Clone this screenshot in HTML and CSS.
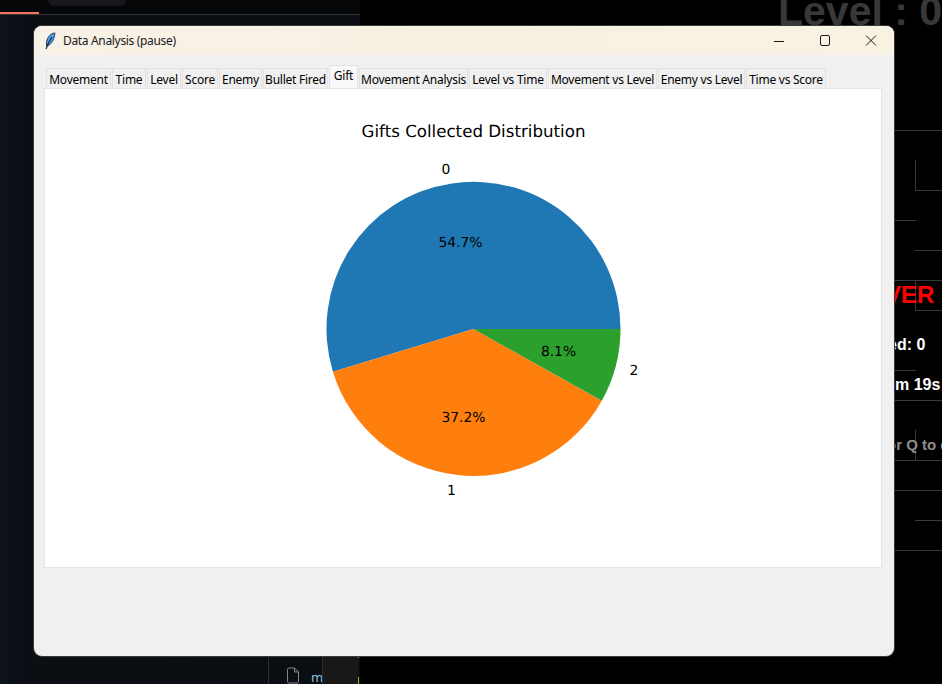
FILE: index.html
```html
<!DOCTYPE html>
<html lang="en">
<head>
<meta charset="utf-8">
<title>Data Analysis (pause)</title>
<link rel="stylesheet" href="styles.css">
</head>
<body>
<div class="desktop">
  <div class="editor-side">
    <div class="pill"></div>
    <div class="progress"></div>
    <div class="rule"></div>
    <div class="file-divider"></div>
    <svg class="file-icon" viewBox="0 0 14 17" width="14" height="17"><path d="M1.500 2.500a1.500 1.500 0 0 1 1.500-1.500h5.500l4 4v9.500a1.500 1.500 0 0 1-1.500 1.500h-8a1.500 1.500 0 0 1-1.500-1.500zM8.500 1v4h4" fill="none" stroke="#83878e" stroke-width="1"/></svg>
    <span class="file-name">m</span>
    <div class="file-tab"></div>
    <div class="tick tick-a"></div>
    <div class="tick tick-b"></div>
  </div>
  <div class="game">
    <span class="level">Level : 0</span>
    <span class="maze h" style="left:534px;top:130px;width:48px"></span>
    <span class="maze h" style="left:534px;top:220px;width:22px"></span>
    <span class="maze v" style="left:555px;top:160px;height:30px"></span>
    <span class="maze h" style="left:555px;top:190px;width:27px"></span>
    <span class="maze h" style="left:555px;top:250px;width:27px"></span>
    <span class="maze h" style="left:534px;top:280px;width:48px"></span>
    <span class="maze v" style="left:555px;top:280px;height:30px"></span>
    <span class="maze h" style="left:555px;top:310px;width:27px"></span>
    <span class="maze h" style="left:534px;top:370px;width:22px"></span>
    <span class="maze h" style="left:534px;top:400px;width:48px"></span>
    <span class="maze v" style="left:555px;top:430px;height:30px"></span>
    <span class="maze h" style="left:534px;top:460px;width:48px"></span>
    <span class="maze h" style="left:534px;top:490px;width:48px"></span>
    <span class="maze h" style="left:555px;top:520px;width:27px"></span>
    <span class="maze h" style="left:534px;top:550px;width:48px"></span>
    <span class="game-over">VER</span>
    <span class="stat stat-gifts">ed: 0</span>
    <span class="stat stat-time">m 19s</span>
    <span class="stat stat-quit">or Q to q</span>
  </div>

  <div class="window">
    <header class="titlebar">
      <svg class="feather" viewBox="0 0 12 18" width="12" height="18">
        <path d="M11 1C7 1 3.500 4.500 2.500 10L2.500 14C6.500 13.500 10 9 11 1Z" fill="#4a9ce8" stroke="#14263a" stroke-width="0.800"/>
        <path d="M8 5C6 8 3.500 12 2 17" fill="none" stroke="#0e2238" stroke-width="1.100"/>
      </svg>
      <span class="title">Data Analysis (pause)</span>
      <div class="controls">
        <svg class="ctl" viewBox="0 0 46 29" width="46" height="29"><path d="M18 15.500h10" stroke="#1a1a1a"/></svg>
        <svg class="ctl" viewBox="0 0 46 29" width="46" height="29"><rect x="18.500" y="9.500" width="9" height="10" rx="1.500" fill="none" stroke="#1a1a1a"/></svg>
        <svg class="ctl" viewBox="0 0 46 29" width="46" height="29"><path d="M18 9.500l10 10M28 9.500l-10 10" stroke="#1a1a1a" fill="none"/></svg>
      </div>
    </header>
    <div class="content">
      <nav class="tabs">
        <span class="tab t-movement">Movement</span>
        <span class="tab t-time">Time</span>
        <span class="tab t-level">Level</span>
        <span class="tab t-score">Score</span>
        <span class="tab t-enemy">Enemy</span>
        <span class="tab t-bullet">Bullet Fired</span>
        <span class="tab active t-gift">Gift</span>
        <span class="tab t-analysis">Movement Analysis</span>
        <span class="tab t-lvt">Level vs Time</span>
        <span class="tab t-mvl">Movement vs Level</span>
        <span class="tab t-evl">Enemy vs Level</span>
        <span class="tab t-tvs">Time vs Score</span>
      </nav>
      <section class="panel">
        <svg class="chart" viewBox="0 0 836 478" width="836" height="478">
          <text class="chart-title" x="428.500" y="48" text-anchor="middle">Gifts Collected Distribution</text>
          <path d="M428.500 240L575.500 240A147 147 0 1 0 287.900 282.700Z" fill="#1f77b4"/>
          <path d="M428.500 240L287.900 282.700A147 147 0 0 0 556.800 311.700Z" fill="#ff7f0e"/>
          <path d="M428.500 240L556.800 311.700A147 147 0 0 0 575.500 240Z" fill="#2ca02c"/>
          <text class="chart-label" x="401" y="84.500" text-anchor="middle">0</text>
          <text class="chart-label" x="415.500" y="157.500" text-anchor="middle">54.7%</text>
          <text class="chart-label" x="406.500" y="405.500" text-anchor="middle">1</text>
          <text class="chart-label" x="418.500" y="332.500" text-anchor="middle">37.2%</text>
          <text class="chart-label" x="589" y="285.500" text-anchor="middle">2</text>
          <text class="chart-label" x="513.500" y="266.500" text-anchor="middle">8.1%</text>
        </svg>
      </section>
    </div>
  </div>
</div>
</body>
</html>
```
FILE: styles.css
```css
* { box-sizing: border-box; }
html, body { margin: 0; padding: 0; }
body { width: 942px; height: 684px; overflow: hidden; background: #000; font-family: "Liberation Sans", Arial, sans-serif; }
.desktop { position: relative; width: 942px; height: 684px; overflow: hidden; }

.editor-side { position: absolute; left: 0; top: 0; width: 360px; height: 684px; background: linear-gradient(90deg, #0d1219 0, #0b0e13 30px, #0a0d11 100%); }
.editor-side::before { content: ""; position: absolute; left: 0; top: 0; width: 360px; height: 14px; background: #050608; }
.pill { position: absolute; left: 48px; top: -10px; width: 78px; height: 16px; border-radius: 6px; background: #16181d; }
.progress { position: absolute; left: 0; top: 12px; width: 39px; height: 2px; background: #f4735f; }
.rule { position: absolute; left: 0; top: 14px; width: 360px; height: 1px; background: #34373c; }
.file-divider { position: absolute; left: 268px; top: 656px; width: 1px; height: 28px; background: #2b2e33; }
.file-icon { position: absolute; left: 286px; top: 667px; }
.file-name { position: absolute; left: 311px; top: 668px; width: 11px; overflow: hidden; font: 13px "Noto Sans", sans-serif; color: #8fc0d8; }
.file-tab { position: absolute; left: 322px; top: 656px; width: 36px; height: 28px; background: #181818; border-left: 1px solid #2b2e33; }
.tick { position: absolute; left: 358px; width: 1px; background: #c8960f; }
.tick-a { top: 656px; height: 2px; }
.tick-b { top: 677px; height: 7px; }

.game { position: absolute; left: 360px; top: 0; width: 582px; height: 684px; background: #000; overflow: hidden; }
.level { position: absolute; left: 418px; top: -12px; font-size: 41px; line-height: 47px; font-weight: 700; color: #383838; white-space: nowrap; }
.maze { position: absolute; background: #3a3a3a; }
.maze.h { height: 1px; }
.maze.v { width: 1px; }
.game-over { position: absolute; left: 525px; top: 280px; font-size: 24px; line-height: 29px; font-weight: 700; color: #f00; }
.stat { position: absolute; font-size: 16px; line-height: 18px; font-weight: 700; color: #fff; white-space: nowrap; }
.stat-gifts { left: 528px; top: 336px; }
.stat-time { left: 535px; top: 376px; }
.stat-quit { left: 527px; top: 436px; font-size: 15px; color: #8e8e8e; }

.window { position: absolute; left: 34px; top: 26px; width: 860px; height: 630px; border-radius: 8px; background: #f0f0f0; box-shadow: 0 0 0 1px #3a3a3a; overflow: hidden; display: flex; flex-direction: column; }
.titlebar { flex: none; height: 29px; display: flex; align-items: center; background: linear-gradient(90deg, #f8f1e6, #f7f2e2); padding-left: 10px; }
.feather { flex: none; }
.title { margin-left: 7px; font: 12px "Noto Sans", sans-serif; letter-spacing: -0.33px; color: #1a1a1a; }
.controls { margin-left: auto; display: flex; align-items: center; }
.ctl { display: block; }
.content { flex: 1; padding: 11px 12px 0 10px; display: flex; flex-direction: column; }
.tabs { display: flex; align-items: flex-end; height: 22px; padding-left: 2px; }
.tab { flex: none; display: flex; align-items: center; justify-content: center; height: 20px; background: #f0f0f0; border: 1px solid #e2e2e2; border-bottom: 0; margin-right: 1px; font: 12px "Noto Sans", sans-serif; letter-spacing: -0.25px; color: #000; white-space: nowrap; padding-top: 2px; }
.tab.active { height: 23px; background: #f9f9f9; padding-top: 0; padding-bottom: 3px; position: relative; z-index: 1; }
.t-movement { width: 65px; }
.t-time { width: 34px; }
.t-level { width: 34px; }
.t-score { width: 36px; }
.t-enemy { width: 43px; }
.t-bullet { width: 65px; }
.t-gift { width: 29px; }
.t-analysis { width: 109px; }
.t-lvt { width: 78px; }
.t-mvl { width: 109px; }
.t-evl { width: 87px; }
.t-tvs { width: 80px; margin-right: 0; }
.panel { width: 838px; height: 480px; background: #fff; border: 1px solid #e3e3e3; }
.chart { display: block; text-rendering: geometricPrecision; }
.chart-title { font: 16.670px "DejaVu Sans", sans-serif; fill: #000; }
.chart-label { font: 13.890px "DejaVu Sans", sans-serif; fill: #000; }
```
